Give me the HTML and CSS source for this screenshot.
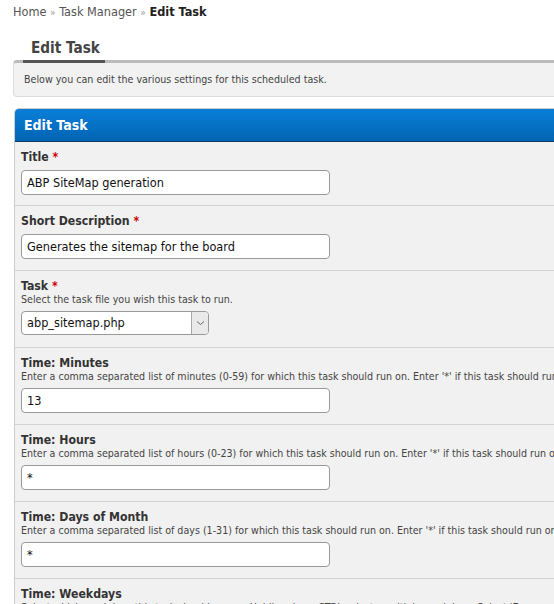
FILE: index.html
```html
<!DOCTYPE html>
<html>
<head>
<meta charset="utf-8">
<link rel="stylesheet" href="styles.css">
</head>
<body>
<div class="page">
  <div class="breadcrumb"><a>Home</a> <span class="sep">&raquo;</span> <a>Task Manager</a> <span class="sep">&raquo;</span> <b>Edit Task</b></div>
  <h2 class="title">Edit Task</h2>
  <div class="notice">Below you can edit the various settings for this scheduled task.</div>
  <div class="panel">
    <div class="panel-head">Edit Task</div>
    <div class="row first">
      <div class="label">Title <span class="req">*</span></div>
      <div class="input">ABP SiteMap generation</div>
    </div>
    <div class="row">
      <div class="label">Short Description <span class="req">*</span></div>
      <div class="input">Generates the sitemap for the board</div>
    </div>
    <div class="row">
      <div class="label">Task <span class="req">*</span></div>
      <div class="desc">Select the task file you wish this task to run.</div>
      <div class="select"><span class="select-val">abp_sitemap.php</span><span class="select-btn"><svg width="9" height="6" viewBox="0 0 9 6"><path d="M1 1.5 L4.5 4.5 L8 1.5" fill="none" stroke="#666" stroke-width="1"/></svg></span></div>
    </div>
    <div class="row">
      <div class="label">Time: Minutes</div>
      <div class="desc">Enter a comma separated list of minutes (0-59) for which this task should run on. Enter '*' if this task should run on every minute.</div>
      <div class="input">13</div>
    </div>
    <div class="row">
      <div class="label">Time: Hours</div>
      <div class="desc">Enter a comma separated list of hours (0-23) for which this task should run on. Enter '*' if this task should run on every hour.</div>
      <div class="input">*</div>
    </div>
    <div class="row">
      <div class="label">Time: Days of Month</div>
      <div class="desc">Enter a comma separated list of days (1-31) for which this task should run on. Enter '*' if this task should run on every day.</div>
      <div class="input">*</div>
    </div>
    <div class="row">
      <div class="label">Time: Weekdays</div>
      <div class="desc">Select which weekdays this task should run on. Holding down CTRL selects multiple weekdays. Select 'Every weekday'.</div>
    </div>
  </div>
</div>
</body>
</html>
```
FILE: styles.css
```css
html, body {
  margin: 0;
  padding: 0;
  overflow: hidden;
  background: #fff;
}
.page {
  width: 760px;
  font-family: "DejaVu Sans Condensed", "DejaVu Sans", sans-serif;
  color: #333;
}
.breadcrumb {
  padding: 4px 0 0 13px;
  height: 16px;
  line-height: 16px;
  font-size: 12.6px;
  color: #555;
}
.breadcrumb b {
  color: #222;
}
.breadcrumb .sep {
  color: #999;
  font-size: 10px;
}
.title {
  margin: 0;
  padding: 18px 0 0 31px;
  height: 20px;
  line-height: 20px;
  font-size: 15.2px;
  font-weight: bold;
  color: #444;
}
.notice {
  position: relative;
  margin: 2px 0 0 13px;
  border: 1px solid #dcdcdc;
  border-top: 3px solid #bbb;
  border-radius: 4px;
  background: #f2f2f2;
  height: 33px;
  line-height: 33px;
  padding-left: 10px;
  font-size: 10.6px;
  color: #444;
}
.notice::before {
  content: "";
  position: absolute;
  left: 9px;
  top: -3px;
  width: 82px;
  height: 3px;
  background: #555;
}
.panel {
  margin: 11px 0 0 14px;
  border: 1px solid #ccc;
  border-radius: 5px;
  overflow: hidden;
  background: #f1f1f1;
}
.panel-head {
  height: 32px;
  line-height: 32px;
  padding-left: 9px;
  background: linear-gradient(#0a7fd8, #0164b3);
  border-bottom: 1px solid #0a3a66;
  color: #fff;
  font-weight: bold;
  font-size: 14px;
}
.row {
  padding: 7px 6px 11px;
  border-top: 1px solid #d4d4d4;
}
.row.first {
  border-top: none;
  padding-bottom: 10px;
}
.label {
  height: 16px;
  line-height: 16px;
  font-size: 12.2px;
  font-weight: bold;
  color: #333;
}
.req {
  color: #c00;
}
.desc {
  line-height: 11px;
  height: 12px;
  font-size: 10.6px;
  color: #444;
  white-space: nowrap;
}
.input {
  margin-top: 5px;
  box-sizing: border-box;
  width: 309px;
  height: 25px;
  line-height: 23px;
  border: 1px solid #999;
  border-radius: 4px;
  background: #fff;
  padding-left: 5px;
  font-size: 12.6px;
  color: #111;
}
.select {
  margin: 5px 0 1px;
  box-sizing: border-box;
  display: flex;
  width: 188px;
  height: 24px;
  border: 1px solid #999;
  border-radius: 4px;
  background: #fff;
  overflow: hidden;
  font-size: 12.6px;
  color: #111;
}
.select-val {
  flex: 1;
  line-height: 22px;
  padding-left: 5px;
}
.select-btn {
  width: 16px;
  border-left: 1px solid #aaa;
  background: #e9e9e9;
  display: flex;
  align-items: center;
  justify-content: center;
}
```
